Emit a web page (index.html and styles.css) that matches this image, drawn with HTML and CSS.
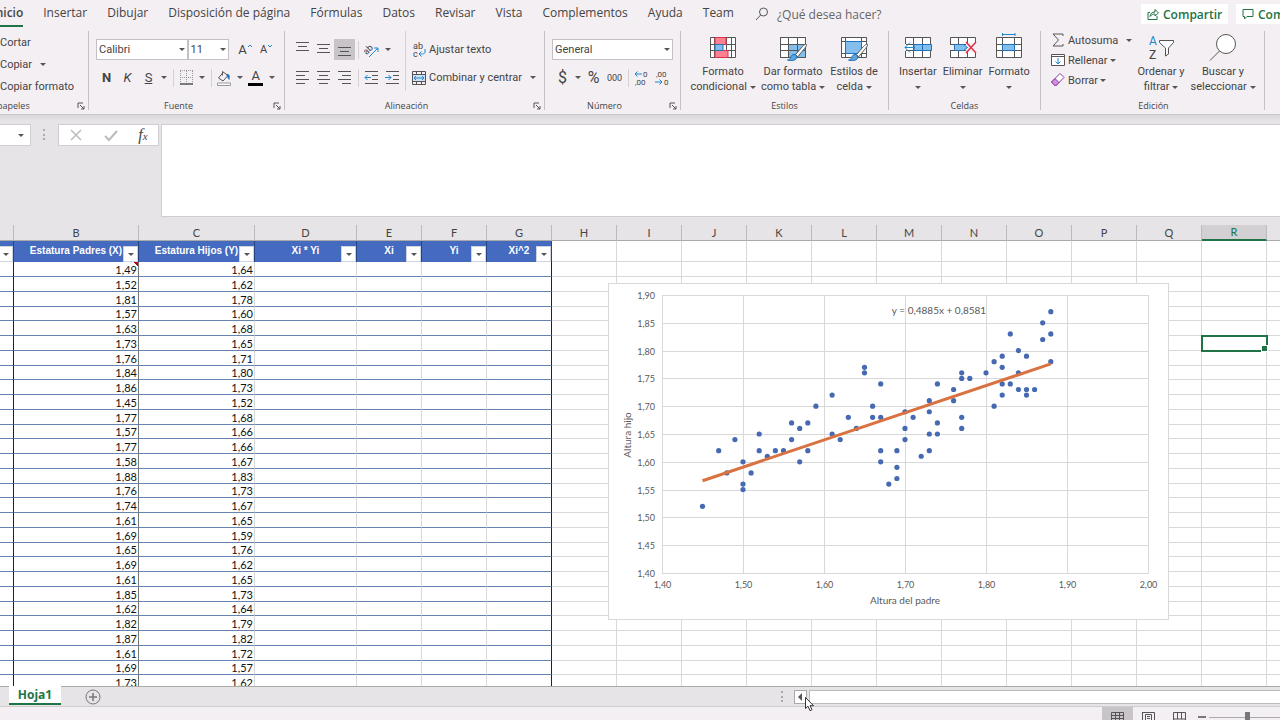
FILE: index.html
```html
<!DOCTYPE html>
<html lang="es">
<head>
    <meta charset="UTF-8">
    <meta name="viewport" content="width=device-width, initial-scale=1.0">
    <title>Regresión lineal - Hoja1</title>
    <link rel="stylesheet" href="styles.css">
</head>
<body>
    <!-- Pestañas de la cinta -->
    <header class="tabs">
        <nav class="tab-list">
            <a href="#" class="active">Inicio</a>
            <a href="#">Insertar</a>
            <a href="#">Dibujar</a>
            <a href="#">Disposición de página</a>
            <a href="#">Fórmulas</a>
            <a href="#">Datos</a>
            <a href="#">Revisar</a>
            <a href="#">Vista</a>
            <a href="#">Complementos</a>
            <a href="#">Ayuda</a>
            <a href="#">Team</a>
        </nav>
        <button class="tell-me">
            <svg width="14" height="14" viewBox="0 0 14 14"><circle cx="8.5" cy="5" r="4" /><path d="M5.6 8 1 13" /></svg>
            ¿Qué desea hacer?
        </button>
        <div class="actions">
            <button class="share">
                <svg width="12" height="12" viewBox="0 0 12 12"><path d="M3 4.5H1v7h9V8M3 8.500c.3-3 2-4.500 5-4.500V1.500L11.500 5 8 8V6C6 6 4.500 6.500 3 8.500z" /></svg>
                Compartir
            </button>
            <button class="comments">
                <svg width="12" height="12" viewBox="0 0 12 12"><path d="M1 1.500h10v7H5L2.500 11V8.500H1z" /></svg>
                Comentarios
            </button>
        </div>
    </header>

    <!-- Cinta de opciones -->
    <section class="ribbon">
        <div class="group clipboard">
            <div class="group-body">
                <button class="big paste" aria-label="Pegar">
                    <svg width="28" height="28" viewBox="0 0 28 28"><path d="M6 5h16v20H6zM10 3h8v4h-8z" /></svg>
                </button>
                <div class="list">
                    <button class="cmd"><i class="icon-space"></i>Cortar</button>
                    <button class="cmd"><i class="icon-space"></i>Copiar <i class="caret wide"></i></button>
                    <button class="cmd"><i class="icon-space"></i>Copiar formato</button>
                </div>
            </div>
            <div class="group-label"><span>Portapapeles</span><button class="launcher" aria-label="Opciones del portapapeles"><svg width="8" height="8" viewBox="0 0 8 8"><path d="M1 6V1h5M3 3l4 4M7 4v3H4" /></svg></button></div>
        </div>

        <div class="group font">
            <div class="group-body rows">
                <div class="row">
                    <span class="drop drop-font"><select aria-label="Fuente"><option>Calibri</option></select></span>
                    <span class="drop drop-size"><select aria-label="Tamaño de fuente"><option>11</option></select></span>
                    <button class="icon grow" aria-label="Aumentar tamaño"><span class="letter">A</span><svg width="6" height="14" viewBox="0 0 6 14"><path class="blue" d="M1 4l2-2 2 2" /></svg></button>
                    <button class="icon" aria-label="Disminuir tamaño"><span class="letter small-a">A</span><svg width="6" height="14" viewBox="0 0 6 14"><path class="blue" d="M1 2l2 2 2-2" /></svg></button>
                </div>
                <div class="row">
                    <button class="icon letter bold">N</button>
                    <button class="icon letter italic">K</button>
                    <button class="icon letter underline">S</button>
                    <button class="drop-arrow" aria-label="Subrayado"><i class="caret"></i></button>
                    <i class="sep"></i>
                    <button class="icon" aria-label="Bordes"><svg width="15" height="15" viewBox="0 0 15 15"><path stroke="#999" stroke-dasharray="1 1" d="M1 .5h13M1.500 1v13M7.500 1v13M13.500 1v13M1 7.500h13" /><path d="M1 14h13" stroke-width="1.500" /></svg></button>
                    <button class="drop-arrow" aria-label="Más bordes"><i class="caret"></i></button>
                    <i class="sep"></i>
                    <button class="icon" aria-label="Color de relleno"><svg width="16" height="16" viewBox="0 0 16 16"><path d="M7 2.500 2.500 8 7 11l5-5.500L6.500 1.500v4" /><path fill="#1e73be" stroke="none" d="M11 4c3 0 3 2.500 2.500 6-2-1-1.500-3-3-4z" /><path fill="#fff" stroke="#999" d="M1.500 13h13v2.500h-13z" /></svg></button>
                    <button class="drop-arrow" aria-label="Más colores de relleno"><i class="caret"></i></button>
                    <button class="icon letter font-color">A</button>
                    <button class="drop-arrow" aria-label="Más colores de fuente"><i class="caret"></i></button>
                </div>
            </div>
            <div class="group-label"><span>Fuente</span><button class="launcher" aria-label="Opciones de fuente"><svg width="8" height="8" viewBox="0 0 8 8"><path d="M1 6V1h5M3 3l4 4M7 4v3H4" /></svg></button></div>
        </div>

        <div class="group align">
            <div class="group-body">
                <div class="rows">
                    <div class="row">
                        <button class="icon" aria-label="Alinear arriba"><svg width="15" height="15" viewBox="0 0 15 15"><path d="M1 .5h13M3 4.500h9M1 8.500h13" /></svg></button>
                        <button class="icon" aria-label="Alinear al medio"><svg width="15" height="15" viewBox="0 0 15 15"><path d="M1 2.500h13M3 6.500h9M1 10.500h13" /></svg></button>
                        <button class="icon pressed" aria-label="Alinear abajo"><svg width="15" height="15" viewBox="0 0 15 15"><path d="M1 5.500h13M3 9.500h9M1 13.500h13" /></svg></button>
                        <i class="sep"></i>
                        <button class="icon" aria-label="Orientación"><svg width="17" height="16" viewBox="0 0 17 16"><text x="1" y="11" transform="rotate(-45 5 9)">ab</text><path class="blue" d="M6 15l9-9M11 6h4v4" /></svg></button>
                        <button class="drop-arrow" aria-label="Más orientaciones"><i class="caret"></i></button>
                    </div>
                    <div class="row">
                        <button class="icon" aria-label="Alinear a la izquierda"><svg width="15" height="15" viewBox="0 0 15 15"><path d="M1 1.500h13M1 5.500h9M1 9.500h13M1 13.500h9" /></svg></button>
                        <button class="icon" aria-label="Centrar"><svg width="15" height="15" viewBox="0 0 15 15"><path d="M1 1.500h13M3 5.500h9M1 9.500h13M3 13.500h9" /></svg></button>
                        <button class="icon" aria-label="Alinear a la derecha"><svg width="15" height="15" viewBox="0 0 15 15"><path d="M1 1.500h13M5 5.500h9M1 9.500h13M5 13.500h9" /></svg></button>
                        <i class="sep"></i>
                        <button class="icon" aria-label="Disminuir sangría"><svg width="15" height="15" viewBox="0 0 15 15"><path d="M1 1.500h13M8 5.500h6M8 9.500h6M1 13.500h13" /><path class="blue" d="M1 7.500h6M3.500 5 1 7.500 3.500 10" /></svg></button>
                        <button class="icon" aria-label="Aumentar sangría"><svg width="15" height="15" viewBox="0 0 15 15"><path d="M1 1.500h13M8 5.500h6M8 9.500h6M1 13.500h13" /><path class="blue" d="M0 7.500h6M3.500 5 6 7.500 3.500 10" /></svg></button>
                    </div>
                </div>
                <div class="rows wrap-col">
                    <div class="row">
                        <button class="cmd"><svg width="16" height="16" viewBox="0 0 16 16"><text x="2" y="7">ab</text><text x="2" y="15">c</text><path class="blue" d="M14 7v3c0 2-2 2-6 2M10.500 9.500 8 12l2.500 2.500" /></svg>Ajustar texto</button>
                    </div>
                    <div class="row">
                        <button class="cmd"><svg width="16" height="16" viewBox="0 0 16 16"><path fill="#cfe3f5" stroke="none" d="M1 4h14v8H1z" /><path d="M1.500 1.500h13v13h-13zM1.500 4.500h13M1.500 11.500h13M5.500 1.500v3M10.500 1.500v3M5.500 11.500v3M10.500 11.500v3" /><path class="blue" d="M3 8h10M5 6 3 8l2 2M11 6l2 2-2 2" /></svg>Combinar y centrar <i class="caret wide"></i></button>
                    </div>
                </div>
            </div>
            <div class="group-label"><span>Alineación</span><button class="launcher" aria-label="Opciones de alineación"><svg width="8" height="8" viewBox="0 0 8 8"><path d="M1 6V1h5M3 3l4 4M7 4v3H4" /></svg></button></div>
        </div>

        <div class="group number">
            <div class="group-body rows">
                <div class="row">
                    <span class="drop drop-number"><select aria-label="Formato de número"><option>General</option></select></span>
                </div>
                <div class="row">
                    <button class="icon sign">$</button>
                    <button class="drop-arrow" aria-label="Más monedas"><i class="caret"></i></button>
                    <button class="icon sign">%</button>
                    <button class="icon thousands">000</button>
                    <i class="sep"></i>
                    <button class="icon" aria-label="Aumentar decimales"><svg class="dec" width="15" height="16" viewBox="0 0 15 16"><text x="9" y="7">0</text><text x="1" y="15">,00</text><path class="blue" d="M1 4h7M3.500 1.500 1 4l2.500 2.500" /></svg></button>
                    <button class="icon" aria-label="Disminuir decimales"><svg class="dec" width="15" height="16" viewBox="0 0 15 16"><text x="1" y="7">,00</text><text x="9" y="15">0</text><path class="blue" d="M0 12h7M4.500 9.500 7 12l-2.500 2.500" /></svg></button>
                </div>
            </div>
            <div class="group-label"><span>Número</span><button class="launcher" aria-label="Opciones de número"><svg width="8" height="8" viewBox="0 0 8 8"><path d="M1 6V1h5M3 3l4 4M7 4v3H4" /></svg></button></div>
        </div>

        <div class="group styles">
            <div class="group-body">
                <button class="big b70">
                    <svg width="28" height="28" viewBox="0 0 28 28"><path fill="#fff" d="M1.500 4.500h25v20h-25z" /><path d="M1.500 11.500h25M1.500 17.500h25M5.500 4.500v20M17.500 4.500v20M22.500 4.500v20" /><path fill="#ff8090" stroke="#e0304a" d="M6 4.500h11v7H6zM6 17.500h13v7H6z" /><path fill="#83beec" stroke="#1e73be" d="M6 11.500h8v6H6z" /></svg>
                    <span>Formato<br>condicional <i class="caret"></i></span>
                </button>
                <button class="big b70">
                    <svg width="28" height="28" viewBox="0 0 28 28"><path fill="#fff" d="M1.500 4.500h25v20h-25z" /><path fill="#83beec" stroke="none" d="M9 11h17v13H9z" /><path d="M1.500 4.500h25v20h-25zM1.500 11.500h25M1.500 17.500h25M9.500 4.500v20M18.500 4.500v20" /><path fill="#fff" d="M27.500 11.500c-1-1-3 1-4 2l-7 8 2 2.500 7-8.500c1-1.500 2.500-3 2-4z" /><path fill="#5ba3dc" stroke="#1e73be" d="M16 21.500c-3-.5-4 1.500-4.500 3.500-.5 1-1.500 2-3 2 4 1.500 9 .5 9.500-3z" /></svg>
                    <span>Dar formato<br>como tabla <i class="caret"></i></span>
                </button>
                <button class="big b52">
                    <svg width="28" height="28" viewBox="0 0 28 28"><path fill="#fff" d="M1.500 4.500h25v20h-25z" /><path d="M1.500 8.500h25M1.500 20.500h25M5.500 4.500v20M21.500 4.500v20" /><path fill="#83beec" stroke="#1e73be" d="M5.500 8.500h16v12h-16z" /><path fill="#fff" d="M27.500 11.500c-1-1-3 1-4 2l-7 8 2 2.500 7-8.500c1-1.500 2.500-3 2-4z" /><path fill="#5ba3dc" stroke="#1e73be" d="M16 21.500c-3-.5-4 1.500-4.500 3.500-.5 1-1.500 2-3 2 4 1.500 9 .5 9.500-3z" /></svg>
                    <span>Estilos de<br>celda <i class="caret"></i></span>
                </button>
            </div>
            <div class="group-label"><span>Estilos</span></div>
        </div>

        <div class="group cells">
            <div class="group-body">
                <button class="big b44">
                    <svg width="28" height="28" viewBox="0 0 28 28"><path fill="#fff" d="M1.500 4.500h25v20h-25z" /><path d="M1.500 11.500h25M1.500 17.500h25M9.500 4.500v20M18.500 4.500v20" /><path fill="#83beec" stroke="#1e73be" d="M10 11.500h17.500v6H10z" /><path stroke="#1e73be" d="M18.500 11.500v6" /><path stroke="#f4eff3" stroke-width="4" d="M0 11v7" /><path class="blue" d="M1 14.500h10M6 9.500l-5 5 5 5" /></svg>
                    <span>Insertar<br><i class="caret"></i></span>
                </button>
                <button class="big b46">
                    <svg width="28" height="28" viewBox="0 0 28 28"><path fill="#fff" d="M1.500 4.500h25v20h-25z" /><path d="M1.500 11.500h25M1.500 17.500h25M9.500 4.500v20M18.500 4.500v20" /><path fill="#f4eff3" stroke="none" d="M0 12h6v5H0zM17 10h11v9H17z" /><path fill="#83beec" stroke="#1e73be" d="M5.500 11.500h9l4 3-4 3h-9z" /><path stroke="#e0304a" stroke-width="1.500" d="M17 9l10 11M27 9 17 20" /></svg>
                    <span>Eliminar<br><i class="caret"></i></span>
                </button>
                <button class="big b48">
                    <svg width="28" height="28" viewBox="0 0 28 28"><path fill="#fff" d="M1.500 4.500h25v20h-25z" /><path d="M1.500 11.500h25M1.500 17.500h25M7.500 4.500v20M19.500 4.500v20" /><path fill="#83beec" stroke="#1e73be" d="M7.500 11.500h12v6h-12z" /><path class="blue" d="M7 1.500h13M7.500 0v3M20 0v3" /></svg>
                    <span>Formato<br><i class="caret"></i></span>
                </button>
            </div>
            <div class="group-label"><span>Celdas</span></div>
        </div>

        <div class="group editing">
            <div class="group-body">
                <div class="list">
                    <button class="cmd"><svg width="16" height="16" viewBox="0 0 16 16"><path d="M13 4V2H3l5.500 6L3 14h10v-2" /></svg>Autosuma <i class="caret wide"></i></button>
                    <button class="cmd"><svg width="16" height="16" viewBox="0 0 16 16"><path fill="#fff" d="M1.500 2.500h13v11h-13zM1.500 4.500h13" /><path class="blue" d="M8 6v6M5.500 9.500 8 12l2.500-2.500" /></svg>Rellenar <i class="caret"></i></button>
                    <button class="cmd"><svg width="16" height="16" viewBox="0 0 16 16"><path fill="#fff" stroke="#8d3a9e" d="M10 1.500l4 4-8.500 8.500-4-4z" /><path fill="#cf8fdc" stroke="#8d3a9e" d="M5 6.500l4 4L5.500 14l-4-4z" /></svg>Borrar <i class="caret"></i></button>
                </div>
                <button class="big b56">
                    <svg width="28" height="28" viewBox="0 0 28 28"><text class="az-a" x="2" y="12">A</text><text class="az-z" x="2" y="26">Z</text><path fill="#fff" d="M12.500 7.500h14v2l-5 5.500v6l-3 2v-8l-6-5.500z" /></svg>
                    <span>Ordenar y<br>filtrar <i class="caret"></i></span>
                </button>
                <button class="big b68">
                    <svg width="28" height="28" viewBox="0 0 28 28"><circle fill="#fff" cx="17" cy="11" r="9.500" /><path d="M10.500 18 1 27.500" /></svg>
                    <span>Buscar y<br>seleccionar <i class="caret"></i></span>
                </button>
            </div>
            <div class="group-label"><span>Edición</span></div>
        </div>
    </section>

    <!-- Barra de fórmulas -->
    <section class="formula-bar">
        <button class="name-box" aria-label="Cuadro de nombres"><i class="caret"></i></button>
        <i class="dots"></i>
        <div class="fx-box">
            <button aria-label="Cancelar"><svg width="14" height="14" viewBox="0 0 14 14"><path stroke="#bbb" stroke-width="1.500" d="M2 2l10 10M12 2 2 12" /></svg></button>
            <button aria-label="Introducir"><svg width="14" height="14" viewBox="0 0 14 14"><path stroke="#bbb" stroke-width="2" d="M1 8l4 4 8-9" /></svg></button>
            <button class="fx">f<small>x</small></button>
        </div>
        <textarea class="formula" aria-label="Fórmula"></textarea>
    </section>

    <!-- Hoja de cálculo -->
    <main class="sheet">
        <table class="grid">
            <colgroup>
                <col class="col-a"><col class="col-b"><col class="col-c"><col class="col-d">
                <col span="15" class="col-n">
            </colgroup>
            <thead id="gridHead"></thead>
            <tbody id="gridBody"></tbody>
        </table>
        <div class="chart">
            <svg id="chart" width="559" height="335" viewBox="0 0 559 335"></svg>
        </div>
    </main>

    <!-- Pestañas de hojas y desplazamiento -->
    <footer class="sheet-bar">
        <button class="sheet-tab">Hoja1</button>
        <button class="add-sheet" aria-label="Hoja nueva"><svg width="16" height="16" viewBox="0 0 16 16"><circle cx="8" cy="8" r="7" /><path stroke-width="1.500" d="M8 4v8M4 8h8" /></svg></button>
        <div class="scroll">
            <i class="dots"></i>
            <button class="scroll-left" aria-label="Desplazar a la izquierda"><svg width="6" height="8" viewBox="0 0 6 8"><path fill="#555" stroke="none" d="M5 0v8L1 4z" /></svg></button>
            <div class="scroll-track"></div>
            <svg class="pointer" width="10" height="15" viewBox="0 0 10 15"><path fill="#fff" stroke="#333" d="M.5.5v11L3 9.200l2 4.500 2-1-2-4h3.500z" /></svg>
        </div>
    </footer>
    <div class="status-bar">
        <button class="view on" aria-label="Normal"><svg width="13" height="11" viewBox="0 0 13 11"><path d="M.5 1.500h12v9H.5zM.5 4.500h12M.5 7.500h12M4.500 1v9M8.500 1v9" /></svg></button>
        <button class="view" aria-label="Diseño de página"><svg width="13" height="11" viewBox="0 0 13 11"><path d="M.5 1v10M.5 1.500h12V11M3.500 11V3.500h6V11M5 5.500h3M5 7.500h3M5 9.500h3" /></svg></button>
        <button class="view" aria-label="Salto de página"><svg width="13" height="11" viewBox="0 0 13 11"><path d="M.5 11V1.500h12V11M4.500 1v7M8.500 1v7H1M12 8H8" /></svg></button>
        <button class="zoom-out" aria-label="Alejar"></button>
        <input type="range" class="zoom" aria-label="Zoom" min="0" max="100" value="50">
    </div>

    <script>
        // Datos de la tabla: estatura del padre y estatura del hijo
        var estaturas = [
            ['1,49', '1,64'], ['1,52', '1,62'], ['1,81', '1,78'], ['1,57', '1,60'], ['1,63', '1,68'],
            ['1,73', '1,65'], ['1,76', '1,71'], ['1,84', '1,80'], ['1,86', '1,73'], ['1,45', '1,52'],
            ['1,77', '1,68'], ['1,57', '1,66'], ['1,77', '1,66'], ['1,58', '1,67'], ['1,88', '1,83'],
            ['1,76', '1,73'], ['1,74', '1,67'], ['1,61', '1,65'], ['1,69', '1,59'], ['1,65', '1,76'],
            ['1,69', '1,62'], ['1,61', '1,65'], ['1,85', '1,73'], ['1,62', '1,64'], ['1,82', '1,79'],
            ['1,87', '1,82'], ['1,61', '1,72'], ['1,69', '1,57'], ['1,73', '1,62']
        ];

        // Puntos del gráfico
        var puntos = [
            [1.45, 1.52], [1.47, 1.62], [1.48, 1.58], [1.49, 1.64], [1.50, 1.60], [1.50, 1.56], [1.50, 1.55],
            [1.51, 1.58], [1.52, 1.65], [1.52, 1.62], [1.53, 1.61], [1.54, 1.62], [1.55, 1.62], [1.56, 1.67],
            [1.56, 1.64], [1.57, 1.66], [1.57, 1.60], [1.58, 1.67], [1.58, 1.62], [1.59, 1.70], [1.61, 1.72],
            [1.61, 1.65], [1.62, 1.64], [1.63, 1.68], [1.64, 1.66], [1.65, 1.77], [1.65, 1.76], [1.66, 1.70],
            [1.66, 1.68], [1.67, 1.74], [1.67, 1.68], [1.67, 1.62], [1.67, 1.60], [1.68, 1.56], [1.69, 1.62],
            [1.69, 1.59], [1.69, 1.57], [1.70, 1.69], [1.70, 1.66], [1.70, 1.64], [1.71, 1.68], [1.72, 1.61],
            [1.73, 1.71], [1.73, 1.69], [1.73, 1.65], [1.73, 1.62], [1.74, 1.74], [1.74, 1.67], [1.74, 1.65],
            [1.76, 1.73], [1.76, 1.71], [1.77, 1.76], [1.77, 1.75], [1.77, 1.68], [1.77, 1.66], [1.78, 1.75],
            [1.80, 1.76], [1.81, 1.78], [1.81, 1.70], [1.82, 1.79], [1.82, 1.77], [1.82, 1.74], [1.82, 1.72],
            [1.83, 1.83], [1.83, 1.74], [1.84, 1.80], [1.84, 1.76], [1.84, 1.73], [1.85, 1.79], [1.85, 1.73],
            [1.85, 1.72], [1.86, 1.73], [1.87, 1.85], [1.87, 1.82], [1.88, 1.87], [1.88, 1.83], [1.88, 1.78]
        ];

        var letras = 'ABCDEFGHIJKLMNOPQRS'.split('');
        var titulos = ['', 'Estatura Padres (X)', 'Estatura Hijos (Y)', 'Xi * Yi', 'Xi', 'Yi', 'Xi^2'];

        // Cabecera: letras de columna y títulos con filtro
        var head = '<tr class="letters">';
        letras.forEach(function(letra) {
            head += '<th' + (letra === 'R' ? ' class="selected"' : '') + '>' + (letra === 'A' ? '' : letra) + '</th>';
        });
        head += '</tr><tr class="titles">';
        letras.forEach(function(letra, i) {
            if (i < titulos.length) {
                head += '<th>' + titulos[i] + '<button class="filter" aria-label="Filtrar ' + letra + '"><i class="caret"></i></button></th>';
            } else {
                head += '<td></td>';
            }
        });
        document.getElementById('gridHead').innerHTML = head + '</tr>';

        // Filas de datos
        var body = '';
        estaturas.forEach(function(fila, n) {
            body += '<tr>';
            letras.forEach(function(letra, i) {
                var clase = i < 7 ? 'data' : '';
                if (letra === 'R' && n === 5) clase = 'current';
                if (letra === 'B' && n === 0) clase += ' note';
                body += '<td class="' + clase + '">' + (i === 1 || i === 2 ? fila[i - 1] : '') + '</td>';
            });
            body += '</tr>';
        });
        document.getElementById('gridBody').innerHTML = body;

        // Gráfico de dispersión
        function px(x) { return 53 + (x - 1.4) * 810; }
        function py(y) { return 289 - (y - 1.4) * 556; }
        function num(v) { return v.toFixed(2).replace('.', ','); }

        var svg = '';
        for (var i = 0; i <= 10; i++) {
            var v = 1.4 + i * 0.05;
            var y = Math.round(py(v)) + 0.5;
            svg += '<line class="gridline" x1="53" x2="540" y1="' + y + '" y2="' + y + '"/>';
            svg += '<text class="tick" text-anchor="end" x="46" y="' + (y + 3) + '">' + num(v) + '</text>';
        }
        for (var j = 0; j <= 6; j++) {
            var w = 1.4 + j * 0.1;
            var x = Math.round(px(w)) + 0.5;
            svg += '<line class="gridline" y1="11" y2="289" x1="' + x + '" x2="' + x + '"/>';
            svg += '<text class="tick" text-anchor="middle" x="' + x + '" y="304">' + num(w) + '</text>';
        }
        puntos.forEach(function(p) {
            svg += '<circle class="point" r="2.6" cx="' + px(p[0]) + '" cy="' + py(p[1]) + '"/>';
        });
        svg += '<line class="trend" x1="' + px(1.45) + '" y1="' + py(1.566) + '" x2="' + px(1.88) + '" y2="' + py(1.776) + '"/>';
        svg += '<text class="axis" text-anchor="middle" x="330" y="30">y = 0,4885x + 0,8581</text>';
        svg += '<text class="axis" text-anchor="middle" x="296" y="320">Altura del padre</text>';
        svg += '<text class="axis" text-anchor="middle" transform="translate(22 151) rotate(-90)">Altura hijo</text>';
        document.getElementById('chart').innerHTML = svg;
    </script>
</body>
</html>
```

FILE: styles.css
```css
* {
    box-sizing: border-box;
}

body {
    margin: 0;
    height: 100vh;
    overflow: hidden;
    display: flex;
    flex-direction: column;
    font-family: Roboto, "Open Sans", sans-serif;
    font-size: 11px;
    color: #444;
    background-color: #f4eff3;
}

button,
select,
textarea {
    font: inherit;
    color: inherit;
    background: none;
    border: none;
    padding: 0;
    margin: 0;
}

button {
    white-space: nowrap;
}

svg {
    display: block;
    flex: none;
    fill: none;
    stroke: #555;
}

svg text {
    fill: #444;
    stroke: none;
}

svg .blue {
    stroke: #1e86d0;
}

.caret {
    display: inline-block;
    border: 3px solid transparent;
    border-top-color: #555;
    border-bottom: none;
    vertical-align: middle;
}

/* Pestañas */
.tabs {
    display: flex;
    align-items: center;
    flex: none;
    height: 28px;
    font-family: "Open Sans", sans-serif;
    font-size: 12px;
}

.tab-list {
    display: flex;
    gap: 20px;
    margin-left: -8px;
}

.tab-list a {
    color: #444;
    text-decoration: none;
    line-height: 24px;
    white-space: nowrap;
    border-bottom: 2px solid transparent;
}

.tab-list .active {
    font-weight: 600;
    border-bottom-color: #217346;
}

.tell-me {
    display: flex;
    align-items: center;
    gap: 8px;
    margin-left: 21px;
    color: #666;
}

.actions {
    display: flex;
    gap: 8px;
    margin-left: auto;
    margin-right: -56px;
}

.actions button {
    display: flex;
    align-items: center;
    gap: 4px;
    height: 20px;
    padding: 0 6px;
    background-color: #fff;
    color: #217346;
    font-weight: 600;
}

.actions svg {
    stroke: #217346;
}

.share {
    width: 87px;
}

.comments {
    width: 100px;
}

/* Cinta */
.ribbon {
    display: flex;
    flex: none;
    height: 87px;
    padding: 3px 0 4px;
    border-bottom: 1px solid #cbc8cb;
}

.group {
    display: flex;
    flex-direction: column;
    flex: none;
    border-right: 1px solid #c4c0c3;
    padding: 0 7px;
}

.clipboard { width: 154px; margin-left: -65px; padding: 0; }
.font { width: 196px; }
.align { width: 260px; }
.number { width: 136px; }
.styles { width: 208px; }
.cells { width: 152px; }
.editing { width: 224px; padding-left: 9px; }

.group-body {
    display: flex;
    flex: 1;
}

.rows {
    display: flex;
    flex-direction: column;
    gap: 7px;
    padding-top: 8px;
}

.row {
    display: flex;
    align-items: center;
    height: 21px;
}

.group-label {
    display: flex;
    height: 9px;
    line-height: 9px;
    font-family: "Open Sans", sans-serif;
    font-size: 9px;
}

.group-label span {
    flex: 1;
    text-align: center;
}

.launcher {
    display: flex;
    align-items: center;
    justify-content: flex-end;
    width: 20px;
    margin-right: -4px;
}

.clipboard .launcher {
    width: 16px;
    margin-right: 3px;
}

.list {
    display: flex;
    flex-direction: column;
}

.cmd {
    display: flex;
    align-items: center;
    height: 20px;
    gap: 2px;
}

.clipboard .cmd {
    height: 22px;
}

.icon-space {
    width: 18px;
}

.caret.wide {
    margin-left: 6px;
}

.paste {
    width: 45px;
}

.big {
    display: flex;
    flex-direction: column;
    align-items: center;
    padding-top: 2px;
    gap: 3px;
    line-height: 15px;
}

.b70 { width: 70px; }
.b52 { width: 52px; }
.b44 { width: 44px; }
.b46 { width: 46px; }
.b48 { width: 48px; }
.b56 { width: 56px; }
.b68 { width: 68px; }

.editing .list {
    width: 83px;
    margin-top: -1px;
}

.icon {
    display: flex;
    align-items: center;
    justify-content: center;
    width: 21px;
    height: 21px;
    flex: none;
}

.icon text,
.cmd text {
    font-size: 9px;
}

.icon .dec text {
    font-size: 8px;
}

.pressed {
    background-color: #c8c4c7;
}

.drop-arrow {
    width: 11px;
    height: 21px;
    line-height: 10px;
}

.sep {
    width: 1px;
    height: 18px;
    margin: 0 2px 0 3px;
    background-color: #d5d1d4;
}

.letter {
    font-size: 13px;
}

.grow {
    margin-left: 6px;
}

.small-a {
    font-size: 11px;
}

.bold { font-weight: 700; }
.italic { font-style: italic; }
.underline { text-decoration: underline; }

.font-color {
    width: 15px;
    height: 16px;
    margin: 0 3px;
    line-height: 12px;
    align-items: flex-start;
    border-bottom: 3px solid #000;
}

.sign {
    font-size: 16px;
}

.thousands {
    font-size: 9px;
}

.drop {
    position: relative;
    height: 21px;
}

.drop::after {
    content: "";
    position: absolute;
    right: 3px;
    top: 9px;
    border: 3px solid transparent;
    border-top-color: #555;
    border-bottom: none;
    pointer-events: none;
}

.drop select {
    appearance: none;
    width: 100%;
    height: 21px;
    padding: 0 2px;
    background-color: #fff;
    border: 1px solid #c4c0c3;
}

.drop-font { width: 97px; }
.drop-size { width: 44px; }
.drop-number { width: 122px; }

.wrap-col {
    margin-left: 2px;
    padding-left: 5px;
    border-left: 1px solid #d5d1d4;
    margin-bottom: 10px;
}

.az-a,
.az-z {
    font-size: 12px;
}

svg .az-a {
    fill: #1e86d0;
}

/* Barra de fórmulas */
.formula-bar {
    display: flex;
    flex: none;
    height: 110px;
    padding: 9px 0 8px;
    background: linear-gradient(#dad8da, #e6e4e6 6px);
}

.name-box {
    width: 31px;
    height: 22px;
    padding-right: 6px;
    text-align: right;
    background-color: #fff;
    border: 1px solid #cfcdd0;
    border-left: none;
}

.dots {
    width: 3px;
    height: 11px;
    border-left: 2px dotted #aaa;
}

.formula-bar .dots {
    margin: 5px 12px;
}

.fx-box {
    display: flex;
    align-items: center;
    justify-content: space-around;
    width: 101px;
    height: 22px;
    background-color: #fff;
    border: 1px solid #cfcdd0;
}

.fx {
    font-family: "Liberation Serif", serif;
    font-style: italic;
    font-size: 16px;
    line-height: 16px;
}

.fx small {
    font-size: 11px;
}

.formula {
    flex: 1;
    margin-left: 2px;
    background-color: #fff;
    border: 1px solid #cfcdd0;
    border-right: none;
    resize: none;
}

/* Hoja */
.sheet {
    position: relative;
    flex: 1;
    min-height: 0;
    overflow: hidden;
    background-color: #fff;
}

.grid {
    table-layout: fixed;
    width: 1331px;
    border-collapse: separate;
    border-spacing: 0;
    font-family: Lato, sans-serif;
    color: #111;
}

.col-a { width: 14px; }
.col-b { width: 125px; }
.col-c { width: 116px; }
.col-d { width: 102px; }
.col-n { width: 65px; }

.letters th {
    height: 16px;
    padding: 0;
    line-height: 15px;
    font-weight: 400;
    color: #444;
    background-color: #e6e4e6;
    border-right: 1px solid #bbb;
    border-bottom: 1px solid #aaa;
}

.letters .selected {
    line-height: 14px;
    color: #217346;
    background-color: #d2d0d2;
    border-bottom: 2px solid #217346;
}

.titles th {
    position: relative;
    height: 21px;
    padding: 0 0 1px;
    font-family: "Liberation Sans", sans-serif;
    font-size: 10px;
    line-height: 10px;
    white-space: nowrap;
    color: #fff;
    background-color: #446bbf;
    border-right: 1px solid #27447f;
}

.titles td {
    padding: 0;
}

.filter {
    position: absolute;
    right: 0;
    bottom: 0;
    width: 15px;
    height: 16px;
    line-height: 12px;
    background-color: #fff;
    border: 1px solid #cfd3e0;
}

.grid td {
    border-right: 1px solid #d9d9d9;
    border-bottom: 1px solid #d9d9d9;
}

.grid tbody td {
    height: 15px;
    padding: 0 1px 0 0;
    line-height: 13px;
    text-align: right;
}

.grid tbody tr:nth-child(4n) td {
    height: 14px;
}

.grid tbody .data {
    border-bottom-color: #6584b0;
}

.grid tbody td:nth-child(1),
.grid tbody td:nth-child(7) {
    border-right-color: #222;
}

.grid tbody td:nth-child(2) {
    border-right-color: #777;
}

.grid .note {
    background: linear-gradient(225deg, #c00020 3px, transparent 3px);
}

.grid .current {
    position: relative;
    outline: 2px solid #217346;
    outline-offset: -1px;
}

.current::after {
    content: "";
    position: absolute;
    right: -2px;
    bottom: -2px;
    width: 5px;
    height: 5px;
    background-color: #217346;
    border: 1px solid #fff;
}

.chart {
    position: absolute;
    left: 608px;
    top: 58px;
    background-color: #fff;
    border: 1px solid #d9d9d9;
    font-family: Lato, sans-serif;
}

.gridline {
    stroke: #d9d9d9;
}

.chart text {
    fill: #595959;
}

.tick {
    font-size: 9px;
}

.axis {
    font-size: 10px;
}

.point {
    fill: #4669b2;
    stroke: none;
}

.trend {
    stroke: #d97240;
    stroke-width: 3px;
}

/* Barra de hojas */
.sheet-bar {
    display: flex;
    flex: none;
    height: 21px;
    background-color: #e6e4e6;
    border-top: 1px solid #aaa;
    border-bottom: 1px solid #cfcdd0;
}

.sheet-tab {
    width: 52px;
    height: 19px;
    margin-left: 9px;
    margin-top: -1px;
    line-height: 16px;
    font-family: "Open Sans", sans-serif;
    font-size: 12px;
    font-weight: 700;
    color: #217346;
    background-color: #fff;
    border-bottom: 2px solid #217346;
}

.add-sheet {
    margin-left: 24px;
}

.add-sheet svg {
    stroke: #777;
}

.scroll {
    position: relative;
    display: flex;
    align-items: center;
    width: 39%;
    margin-left: auto;
}

.scroll-left {
    display: flex;
    align-items: center;
    justify-content: center;
    width: 13px;
    height: 14px;
    margin-left: 10px;
    background-color: #fff;
    border: 1px solid #aaa;
}

.scroll-track {
    flex: 1;
    height: 14px;
    margin-left: 2px;
    background-color: #fff;
    border: 1px solid #bbb;
    border-right: none;
}

.pointer {
    position: absolute;
    left: 24px;
    top: 10px;
    z-index: 1;
}

/* Barra de estado */
.status-bar {
    display: flex;
    flex: none;
    justify-content: flex-end;
    height: 22px;
    margin-bottom: -9px;
    margin-right: -5px;
}

.view {
    display: flex;
    justify-content: center;
    width: 31px;
    padding-top: 4px;
}

.view.on {
    background-color: #c8c4c7;
}

.zoom-out {
    width: 8px;
    height: 2px;
    margin: 9px 3px 0;
    background-color: #777;
}

.zoom {
    appearance: none;
    width: 76px;
    height: 1px;
    margin: 10px 0 0;
    background-color: #aaa;
}

.zoom::-webkit-slider-thumb {
    appearance: none;
    width: 5px;
    height: 11px;
    background-color: #777;
}
```
